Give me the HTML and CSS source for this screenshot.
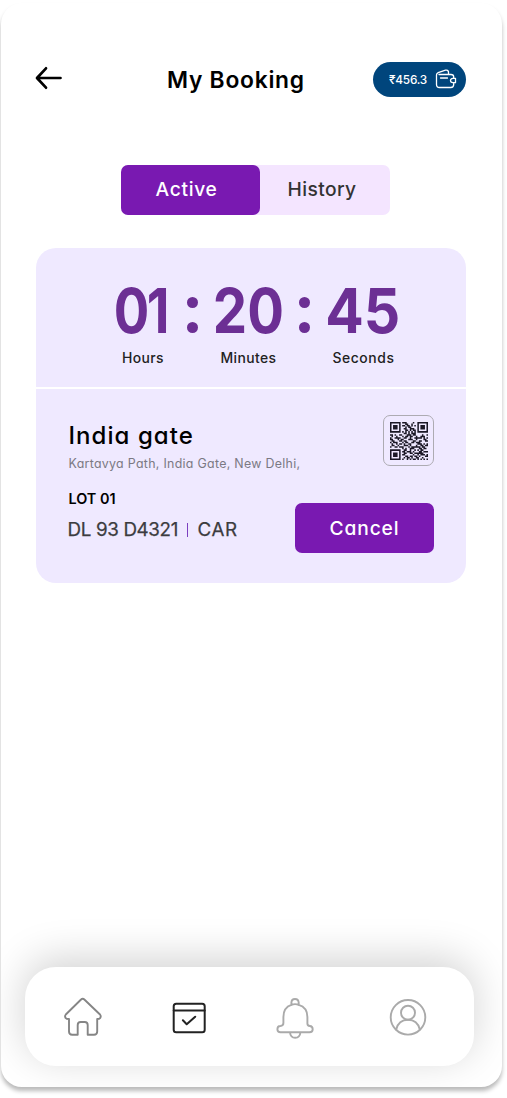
FILE: index.html
```html
<!DOCTYPE html>
<html lang="en">
<head>
<meta charset="utf-8">
<title>My Booking</title>
<link rel="stylesheet" href="styles.css">
</head>
<body>
<main class="phone">
  <header class="header">
    <svg class="back" viewBox="0 0 28 24" width="28" height="24"><path d="M26.500 12H3.500M12 2.300L3 12l9 9.700"/></svg>
    <h1 class="title">My Booking</h1>
    <div class="wallet">
      <span class="amount">₹456.3</span>
      <svg viewBox="0 0 22 20" width="22" height="20"><path d="M4 5.500H16Q18.700 5.500 18.700 8V9.200M18.700 13.800V15.500Q18.700 18.500 15.700 18.500H4.500Q1.500 18.500 1.500 15.500V6Q1.500 4.300 3.200 3.600L10.500 1.200Q13 .600 13.500 3V5.300M5.500 9H12.500M20.500 9.300H17.800Q15.500 9.600 15.500 11.500T17.800 13.700H20.500Z"/></svg>
    </div>
  </header>
  <nav class="tabs">
    <span class="tab active">Active</span>
    <span class="tab history">History</span>
  </nav>
  <section class="card">
    <div class="timer">
      <div class="unit hours"><b>01</b><small>Hours</small></div>
      <div class="colon"><i></i><i></i></div>
      <div class="unit minutes"><b>20</b><small>Minutes</small></div>
      <div class="colon"><i></i><i></i></div>
      <div class="unit seconds"><b>45</b><small>Seconds</small></div>
    </div>
    <div class="details">
      <div class="info">
        <h2 class="place">India gate</h2>
        <p class="address">Kartavya Path, India Gate, New Delhi,</p>
        <p class="lot">LOT 01</p>
        <p class="vehicle"><span class="plate">DL 93 D4321</span><i class="bar"></i><span class="kind">CAR</span></p>
      </div>
      <div class="actions">
        <div class="qr"><svg viewBox="0 0 25 25" width="38" height="38"><path id="qr-modules"/></svg></div>
        <button class="cancel">Cancel</button>
      </div>
    </div>
  </section>
  <nav class="bottom-nav">
    <svg class="home" viewBox="0 0 44 44"><path d="M19.800 4.700Q21.700 2.900 23.600 4.700L39 19.500Q40.300 21 39.300 22.800Q38.300 24 36.200 24V36.500Q36.200 39.700 33 39.700H26.700V30Q26.700 27 23.700 27H19.700Q16.700 27 16.700 30V39.700H11.200Q8 39.700 8 36.500V24Q5.500 24 4.500 22.800Q3.500 21 4.800 19.500Z"/></svg>
    <svg class="calendar" viewBox="0 0 44 44"><rect x="6.700" y="8.700" width="31" height="28.600" rx="2.500"/><path d="M6.700 15.500H37.700M15.900 25.300L19.700 29.200L28.200 21.700"/></svg>
    <svg class="bell" viewBox="0 0 44 44"><path d="M18.400 10V7.500Q18.600 4 22 4T25.700 7.500V10M18.400 9.900Q22 8.300 25.700 9.900Q34.400 12.500 34.400 22V28.500Q34.400 30.800 36.800 31Q39.700 31.200 39.700 34.200T36.500 37.300H7.500Q4.400 37.300 4.400 34.200T7.400 31Q10.400 30.800 10.400 28V22Q10.400 12.500 18.400 9.900M17 37.500Q17.500 42.800 22.200 42.800T27.400 37.500"/></svg>
    <svg class="user" viewBox="0 0 44 44"><circle cx="22" cy="22.300" r="17.300"/><circle cx="22" cy="17.700" r="7"/><path d="M10.200 34.500Q12.500 24.700 22 24.700T33.800 34.500"/></svg>
  </nav>
</main>
<script src="qr.js"></script>
</body>
</html>
```
FILE: qr.js
```js
const rows = [
  "1111111011100001001111111",
  "1000001000110010001000001",
  "1011101011011010101011101",
  "1011101000101100001011101",
  "1011101001100111001011101",
  "1000001000110101101000001",
  "1111111010101010101111111",
  "0000000001101011100000000",
  "1101001100011101100001001",
  "0100100010110110010011100",
  "1001111001100100111110101",
  "1100010110001110010000110",
  "0110001101100001100110011",
  "1011100010110011011100000",
  "0100101101001100001110101",
  "0110010001110100010011011",
  "1001101110001011111101100",
  "0000000010100111000110110",
  "1111111001100100101011000",
  "1000001011011101000110111",
  "1011101001100110111111000",
  "1011101011000001001011101",
  "1011101000110110110100011",
  "1000001001011010011001000",
  "1111111010010101101010101"
];
let d = "";
rows.forEach((row, y) => [...row].forEach((cell, x) => {
  if (cell === "1") d += `M${x} ${y}h1v1h-1z`;
}));
document.getElementById("qr-modules").setAttribute("d", d);
```
FILE: styles.css
```css
* { box-sizing: border-box; margin: 0; padding: 0; }
body { background: #fff; font-family: Inter, "Open Sans", sans-serif; font-feature-settings: "cv11"; width: 507px; height: 1098px; padding: 3px 0 0 1px; overflow: hidden; color: #0b0b0d; }
svg { display: block; fill: none; stroke: currentColor; stroke-linecap: round; stroke-linejoin: round; flex: none; }
.phone { width: 501px; height: 1084px; padding-top: 57px; display: flex; flex-direction: column; overflow: hidden; border-radius: 21px; background: #fff; box-shadow: 0 4px 4px rgba(0,0,0,.27); }
.header { display: flex; align-items: center; height: 39px; padding: 0 36px 0 33px; flex: none; }
.back { stroke-width: 2.7; margin-bottom: 3px; color: #000; }
.title { flex: 1; font-size: 22.800px; line-height: 26px; font-weight: 600; padding: 1px 0 0 105px; white-space: nowrap; letter-spacing: .75px; color: #000; }
.wallet { width: 93px; height: 35px; border-radius: 18px; background: #00457c; color: #fff; display: flex; align-items: center; justify-content: space-between; padding: 0 9px 0 16px; font-size: 11.800px; font-weight: 500; letter-spacing: -.2px; }
.wallet svg { margin-bottom: 2px; stroke-width: 1.3; }
.tabs { display: flex; margin: 66px 0 0 120px; width: 269px; height: 49.500px; background: #f4e5ff; border-radius: 7px; flex: none; }
.tab { font-size: 19.200px; line-height: 49px; font-weight: 500; letter-spacing: .4px; color: #333; padding-left: 27.500px; }
.tab.active { width: 139px; background: #7919b1; color: #fff; border-radius: 7px; padding-left: 34.500px; letter-spacing: .7px; }
.card { margin: 33.500px 36px 0 34.500px; background: #efe9ff; border-radius: 20px; height: 335px; flex: none; }
.timer { display: flex; gap: 15px; padding: 30.500px 0 0 78px; height: 141px; border-bottom: 2.500px solid #fff; }
.unit { display: flex; flex-direction: column; align-items: center; }
.hours { width: 58px; }
.minutes { width: 71px; }
.seconds { width: 77px; }
.unit b { font-size: 62px; line-height: 63px; font-weight: 700; color: #6c2f94; }
.hours b { letter-spacing: -3px; transform: scaleX(.85); margin-right: 4px; }
.minutes b { transform: scaleX(.88); }
.seconds b { transform: scaleX(.92); }
.unit small { font-size: 13.900px; line-height: 16px; margin-top: 8.500px; font-weight: 500; letter-spacing: .4px; color: #222; padding-left: 1px; }
.seconds small { letter-spacing: .6px; }
.colon { width: 11px; padding-top: 18px; display: flex; flex-direction: column; gap: 14.500px; }
.colon i { width: 11px; height: 11px; border-radius: 50%; background: #6c2f94; }
.details { display: flex; justify-content: space-between; padding: 0 32px 0 33px; }
.info { flex: 1; min-width: 0; padding-top: 32px; white-space: nowrap; }
.place { font-size: 24px; line-height: 30px; font-weight: 500; letter-spacing: 1.050px; color: #000; }
.address { font-size: 12.400px; line-height: 16px; margin-top: 5px; letter-spacing: .3px; color: #7b7983; }
.lot { font-size: 14.400px; line-height: 18px; margin-top: 18px; font-weight: 600; color: #000; }
.vehicle { display: flex; align-items: center; font-size: 18.800px; line-height: 22px; margin-top: 11px; color: #3c3c40; -webkit-text-stroke: .25px #3c3c40; }
.plate { width: 119.500px; letter-spacing: -.35px; margin-left: -1px; }
.bar { width: 1px; height: 14px; background: #7c3fc0; }
.kind { margin-left: 9.500px; letter-spacing: .6px; }
.actions { display: flex; flex: none; flex-direction: column; align-items: flex-end; gap: 36.500px; padding-top: 26px; }
.qr { width: 51px; height: 51px; border: 1.300px solid #adabb2; border-radius: 7px; display: grid; place-items: center; }
.qr path { fill: #1b1826; stroke: none; }
.cancel { width: 139px; height: 50px; font: inherit; font-size: 19.200px; font-weight: 500; letter-spacing: .85px; border: 0; border-radius: 7px; background: #7919b1; color: #fff; }
.bottom-nav { margin: auto 28px 21px 24px; height: 99px; flex: none; border-radius: 31px; background: #fff; box-shadow: 0 -8px 42px rgba(0,0,0,.18); display: flex; align-items: center; gap: 62px; padding-left: 35.600px; }
.bottom-nav svg { width: 44px; height: 44px; stroke-width: 1.900; color: #aaa; }
.bottom-nav .home { color: #858585; }
.bottom-nav .calendar { color: #222; stroke-width: 2; }
.bottom-nav .user { margin-left: 7px; }
```
